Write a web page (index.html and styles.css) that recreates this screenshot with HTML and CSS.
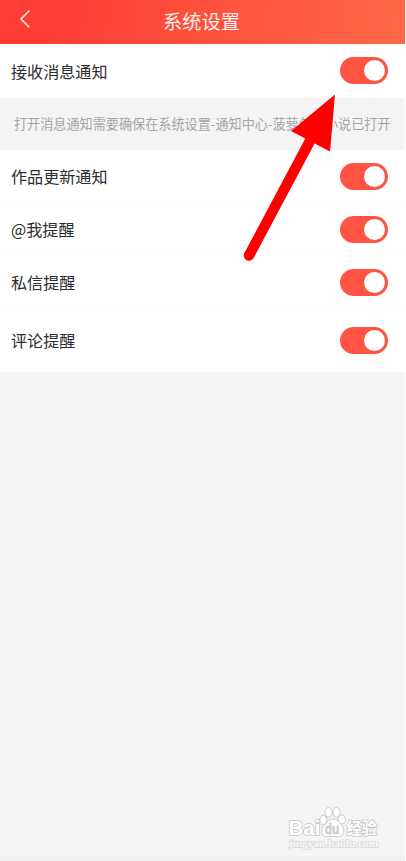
FILE: index.html
```
<!DOCTYPE html>
<html lang="zh-CN">
<head>
<meta charset="utf-8">
<title>系统设置</title>
<link rel="stylesheet" href="styles.css">
</head>
<body>
<div class="screen">
  <header class="bar">
    <svg class="back" viewBox="0 0 12 20" aria-hidden="true"><path d="M10.500 1.500 2 10l8.500 8.500"/></svg>
    <h1 class="title">系统设置</h1>
  </header>
  <main>
    <div class="row row-first"><span>接收消息通知</span><span class="toggle"></span></div>
    <p class="note">打开消息通知需要确保在系统设置-通知中心-菠萝包轻小说已打开</p>
    <div class="row"><span>作品更新通知</span><span class="toggle"></span></div>
    <div class="row"><span>@我提醒</span><span class="toggle"></span></div>
    <div class="row"><span>私信提醒</span><span class="toggle"></span></div>
    <div class="row row-last"><span>评论提醒</span><span class="toggle"></span></div>
  </main>
  <svg class="arrow" viewBox="0 0 406 300" aria-hidden="true">
    <path class="shaft" d="M249 255.500 311 139"/>
    <path class="head" d="M335 94.500 291 131 330 151.500Z"/>
  </svg>
  <svg class="watermark" viewBox="0 0 100 48" aria-hidden="true">
    <g class="mark">
      <text class="latin" x="2.500" y="28.500" textLength="32" lengthAdjust="spacingAndGlyphs">Bai</text>
      <ellipse cx="37.300" cy="14" rx="3.600" ry="4.600"/>
      <ellipse cx="42.500" cy="6.300" rx="3.600" ry="4.900"/>
      <ellipse cx="50.500" cy="6.300" rx="3.600" ry="4.900"/>
      <ellipse cx="55.800" cy="13.500" rx="3.600" ry="4.600"/>
      <path d="M46.500 13c-4.500 0-5.500 3.500-8 6-4 4-4 11.500 2 11.500h12c6.500 0 6.500-7.500 3-11.500-2.500-3-4-6-9-6Z"/>
      <text class="du" x="38.800" y="28" textLength="14.500" lengthAdjust="spacingAndGlyphs">du</text>
      <text class="cjk" x="60.500" y="28" textLength="30.500" lengthAdjust="spacingAndGlyphs">经验</text>
      <text class="url" x="3" y="41" textLength="89" lengthAdjust="spacingAndGlyphs">jingyan.baidu.com</text>
    </g>
  </svg>
</div>
</body>
</html>
```

FILE: styles.css
```
* { box-sizing: border-box; }
body {
  margin: 0;
  background: #fff;
  font-family: "Noto Sans CJK SC", sans-serif;
}
.screen {
  position: relative;
  width: 405px;
  height: 861px;
  background: #f4f4f4;
  border-bottom: 4px solid #f0f0f0;
}
.bar {
  display: grid;
  grid-template-columns: 60px 1fr 60px;
  align-items: center;
  height: 44px;
  padding-bottom: 3px;
  background: linear-gradient(100deg, #ff3c35 10%, #ff6947);
}
.back {
  width: 12px;
  height: 20px;
  margin: -3px 0 0 19px;
  fill: none;
  stroke: #ffe9e6;
  stroke-width: 1.6;
}
.title {
  margin: 0 1px 0 -1px;
  font-size: 19.3px;
  line-height: 40px;
  font-weight: 400;
  text-align: center;
  color: #fff0ed;
}
.row {
  display: flex;
  align-items: center;
  justify-content: space-between;
  height: 53px;
  padding: 0 17px 0 11px;
  background: #fff;
  border-bottom: 1px solid #fbfbfb;
  font-size: 16.1px;
  line-height: 24px;
  color: #2d2d2d;
}
.row-first { height: 54px; }
.row-last { height: 63px; padding-bottom: 1px; border: 0; }
.toggle {
  width: 48px;
  height: 27px;
  padding: 3px;
  border-radius: 14px;
  background: #ff5344;
}
.toggle::before {
  content: "";
  display: block;
  width: 21px;
  height: 21px;
  margin-left: 21px;
  border-radius: 50%;
  background: #fff;
}
.note {
  margin: 0;
  height: 52px;
  padding-left: 14px;
  font-size: 13.13px;
  line-height: 52px;
  white-space: nowrap;
  color: #a5a5a5;
}
.arrow {
  position: absolute;
  left: 0;
  top: 0;
  width: 406px;
  height: 300px;
}
.shaft {
  fill: none;
  stroke: #f00;
  stroke-width: 10.5;
  stroke-linecap: round;
}
.head { fill: #f00; }
.watermark {
  position: absolute;
  left: 286px;
  top: 806px;
  width: 100px;
  height: 48px;
}
.mark {
  fill: #fff;
  stroke: #c4c4c4;
  stroke-width: 0.9;
}
.latin, .cjk, .url {
  stroke-width: 1.4;
  paint-order: stroke;
}
.latin { font: bold 19.5px "Liberation Sans", sans-serif; }
.du {
  font: bold 14.5px "Liberation Sans", sans-serif;
  fill: #d6d6d6;
  stroke: #bbb;
  stroke-width: 0.4;
}
.cjk { font: bold 15.5px "Noto Sans CJK SC", sans-serif; }
.url {
  font: bold 10px "Liberation Serif", serif;
  fill: #fafafa;
  stroke: #d8d8d8;
}
```
